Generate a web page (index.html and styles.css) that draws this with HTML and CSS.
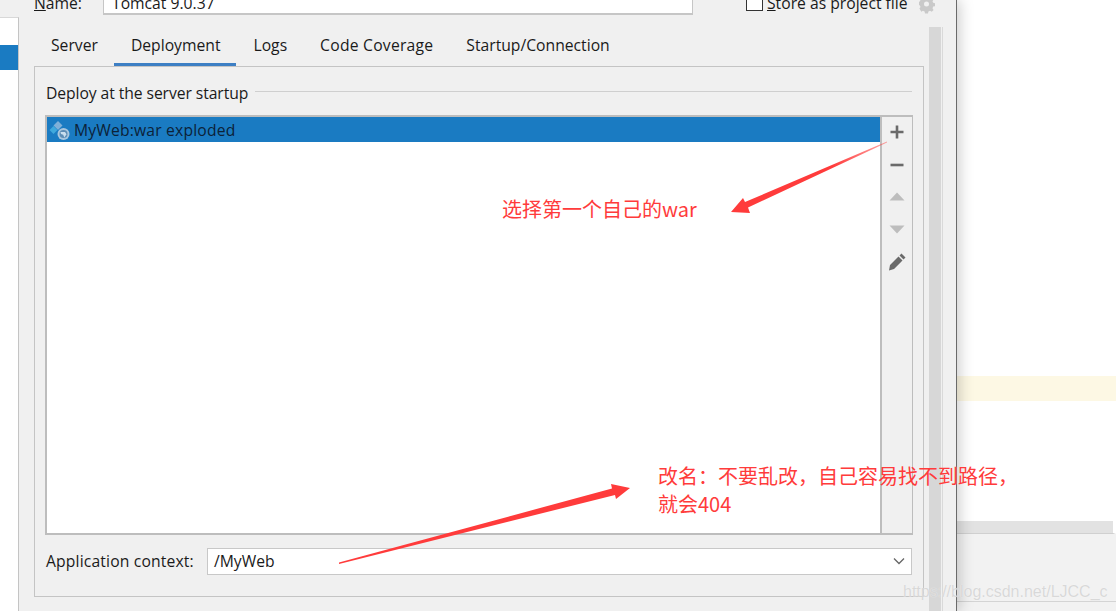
FILE: index.html
```html
<!DOCTYPE html>
<html lang="en">
<head>
<meta charset="utf-8">
<title>Run/Debug Configurations</title>
<link rel="stylesheet" href="styles.css">
</head>
<body>
<div class="screen">
  <div class="dialog">
    <aside class="sidebar"><div class="side-sel"></div></aside>
    <div class="main">
      <div class="namebar">
        <span class="name-label"><u>N</u>ame:</span>
        <div class="name-input">Tomcat 9.0.37</div>
        <span class="check"></span>
        <span class="store"><u>S</u>tore as project file</span>
        <svg class="gear" width="16" height="18" viewBox="0 0 16 18">
          <path fill="#c9c9c9" fill-rule="evenodd" d="M6 0h3l.4 2 1.600.7 1.700-1.100 1.900 1.900-1.100 1.700.7 1.600 2 .4v3l-2 .4-.7 1.600 1.100 1.700-1.900 1.900-1.700-1.100-1.600.7-.4 2H6l-.4-2-1.600-.7-1.700 1.100L.4 12.600l1.100-1.700-.7-1.600-2-.4v-3l2-.4.7-1.600L.4 3.500 2.300 1.600 4 2.700l1.600-.7zM7.500 5.500a2.500 2.500 0 1 0 0 5 2.500 2.500 0 0 0 0-5z"/>
        </svg>
      </div>
      <div class="body">
        <div class="content">
          <nav class="tabs">
            <span class="tab">Server</span>
            <span class="tab active">Deployment</span>
            <span class="tab">Logs</span>
            <span class="tab tab-wide">Code Coverage</span>
            <span class="tab">Startup/Connection</span>
          </nav>
          <section class="panel">
            <div class="legend"><span>Deploy at the server startup</span><i class="rule"></i></div>
            <div class="listwrap">
              <div class="list">
                <div class="row">
                  <svg class="artifact" width="22" height="22" viewBox="0 0 22 22">
                    <path fill="#7fb0d8" d="M9 2 13.500 6.500 9 11 4.500 6.500z"/>
                    <path fill="#3fa9dc" d="M4.500 7 8.500 11 4.500 15 .5 11z"/>
                    <circle cx="14.500" cy="15" r="6" fill="#a8c6de"/>
                    <circle cx="14.500" cy="15" r="4" fill="#5d8db5"/>
                    <path fill="#c9deee" d="M11.500 13h4.500l1.500 2.200-2.200 3.300-1.100-2.800-2.200-.6z"/>
                  </svg>
                  <span>MyWeb:war exploded</span>
                </div>
              </div>
              <div class="tools">
                <svg width="16" height="16" viewBox="0 0 16 16"><path fill="#6a6a6a" d="M6.700 1.500h2.600v5.200h5.200v2.600H9.300v5.200H6.700V9.300H1.500V6.700h5.200z"/></svg>
                <svg class="tool-minus" width="16" height="16" viewBox="0 0 16 16"><path fill="#6a6a6a" d="M1.500 6.700h13v2.600h-13z"/></svg>
                <svg width="16" height="16" viewBox="0 0 16 16"><path fill="#bdbdbd" d="M8 3.500l7.500 8H.5z"/></svg>
                <svg width="16" height="16" viewBox="0 0 16 16"><path fill="#bdbdbd" d="M.5 4.500h15l-7.500 8z"/></svg>
                <svg width="18" height="18" viewBox="0 0 18 18"><path fill="#6a6a6a" d="M13.500.5l4 4-2 2-4-4zM10.500 3.500l4 4L6 16l-5 1.500L2 12z"/></svg>
              </div>
            </div>
            <div class="context">
              <label class="context-label">Application context:</label>
              <div class="combo">
                <span>/MyWeb</span>
                <svg width="12" height="8" viewBox="0 0 12 8"><path fill="none" stroke="#666" stroke-width="1.300" d="M1 1.500 6 6.500 11 1.500"/></svg>
              </div>
            </div>
          </section>
        </div>
        <div class="vscroll"><div class="vthumb"></div></div>
      </div>
    </div>
  </div>
  <div class="editor">
    <div class="code"><div class="caret-line"></div></div>
    <div class="hscroll"></div>
    <div class="status"></div>
  </div>

  <svg class="arrows" width="1116" height="611" viewBox="0 0 1116 611">
    <defs>
      <linearGradient id="fade1" gradientUnits="userSpaceOnUse" x1="731" y1="212" x2="887" y2="142">
        <stop offset="0.65" stop-color="#ff3b3b"/>
        <stop offset="1" stop-color="#ff3b3b" stop-opacity="0.45"/>
      </linearGradient>
    </defs>
    <polygon fill="url(#fade1)" points="731,212 743,198 745,202 887,141.500 887,142.500 748,207.500 750,213"/>
    <polygon fill="#ff3b3b" points="630,488 611,484 612,488.500 339,562.500 339,564 615,495 616,499"/>
  </svg>
  <div class="note note-war">选择第一个自己的war</div>
  <div class="note note-name">改名：不要乱改，自己容易找不到路径，<br>就会404</div>
  <div class="watermark">https://blog.csdn.net/LJCC_c</div>
</div>
</body>
</html>
```
FILE: styles.css
```css
* { box-sizing: border-box; }
html, body { margin: 0; padding: 0; }
body { font-family: "Open Sans", "Noto Sans", sans-serif; font-size: 15.7px; color: #1a1a1a; }
.screen { position: relative; display: flex; width: 1116px; height: 611px; overflow: hidden; background: #fff; }

.dialog { position: relative; z-index: 1; display: flex; flex: none; width: 957px; height: 611px; background: #f0f0f0; border-right: 1px solid #6a6a6a; box-shadow: 2px 0 14px rgba(0,0,0,.22); }
.sidebar { flex: none; width: 19px; margin-top: 17px; background: #fff; border-top: 1px solid #d8d8d8; border-right: 1px solid #c4c4c4; padding-top: 27px; }
.side-sel { height: 25px; background: #1a7bc2; }

.main { flex: 1; min-width: 0; padding-left: 15px; }
.namebar { display: flex; align-items: flex-end; height: 25px; margin-top: -10px; margin-bottom: 12px; }
.name-label { width: 69px; line-height: 20px; margin-bottom: 2px; }
.name-input { width: 590px; height: 25px; padding: 3px 8px 0; background: #fff; border: 1px solid #c6c6c6; border-top: 0; border-bottom-width: 2px; line-height: 20px; }
.check { width: 17px; height: 21px; margin-left: 53px; margin-bottom: 4px; background: #fff; border: 1px solid #333; }
.store { margin-left: 4px; margin-bottom: 2px; line-height: 20px; white-space: nowrap; }
.gear { margin-left: 11px; margin-bottom: 1px; }

.body { display: flex; height: 584px; }
.content { flex: none; width: 890px; padding-top: 3px; }
.tabs { display: flex; height: 36px; }
.tab { height: 36px; padding: 5px 16px 0 17px; line-height: 20px; white-space: nowrap; }
.tab-wide { letter-spacing: .23px; }
.active { border-bottom: 3px solid #3d7fc4; }

.panel { width: 890px; height: 531px; padding: 0 11px; border: 1px solid #c4c4c4; }
.legend { display: flex; align-items: center; gap: 7px; height: 48px; padding-top: 3px; white-space: nowrap; letter-spacing: -.08px; }
.rule { flex: 1; height: 1px; margin-top: -2px; background: #cfcfcf; }

.listwrap { display: flex; width: 868px; height: 420px; margin-left: -1px; border: 1px solid #bdbdbd; border-bottom-width: 2px; border-left-width: 2px; border-top-width: 2px; }
.list { flex: 1; background: #fff; border-right: 2px solid #bdbdbd; }
.row { display: flex; align-items: center; gap: 3px; height: 25px; padding-left: 2px; background: #1a7bc2; color: #0c2238; white-space: nowrap; letter-spacing: .17px; }
.artifact { flex: none; }
.tools { display: flex; flex-direction: column; align-items: center; width: 30px; padding-top: 7px; gap: 16px; }
.tool-minus { margin-top: 1px; }

.context { display: flex; align-items: center; height: 28px; margin-top: 12px; }
.context-label { width: 161px; white-space: nowrap; letter-spacing: .15px; }
.combo { display: flex; align-items: center; justify-content: space-between; width: 705px; height: 27px; padding: 0 6px; background: #fff; border: 1px solid #c8c8c8; }

.vscroll { flex: none; width: 14px; margin-left: 5px; border-right: 1px solid #d9d9d9; }
.vthumb { width: 12px; height: 100%; background: #d7d7d7; }

.editor { flex: 1; display: flex; flex-direction: column; min-width: 0; background: #f2f2f2; }
.code { height: 521px; padding-top: 376px; background: #fff; }
.caret-line { height: 25px; background: #fdf8e4; }
.hscroll { height: 13px; background: #e2e2e2; border-right: 3px solid #fff; border-bottom: 1px solid #d0d0d0; }
.status { height: 68px; border-bottom: 1px solid #d4d4d4; }

.arrows { position: absolute; left: 0; top: 0; z-index: 2; pointer-events: none; }
.note { position: absolute; z-index: 3; font-family: "Noto Sans CJK SC", "Noto Sans", sans-serif; font-size: 20px; line-height: 28px; color: #ff3b3b; white-space: nowrap; }
.note-war { left: 502px; top: 195px; }
.note-name { left: 658px; top: 462px; }
.watermark { position: absolute; z-index: 3; left: 903px; top: 581px; font-family: "Liberation Sans", sans-serif; font-size: 16px; line-height: 22px; color: rgba(205,205,205,.75); text-shadow: 0 0 1px rgba(255,255,255,.8); white-space: nowrap; }
```
